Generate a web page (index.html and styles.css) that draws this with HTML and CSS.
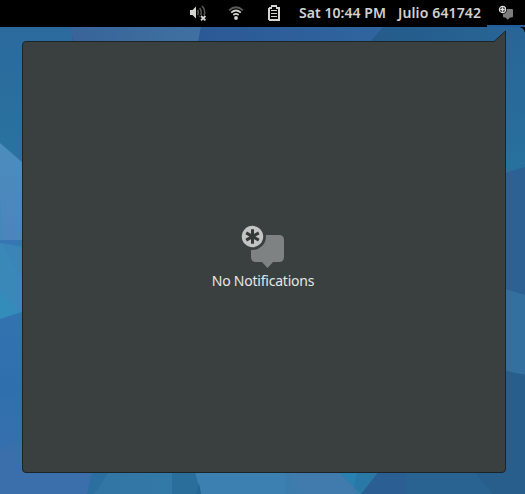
FILE: index.html
```html
<!DOCTYPE html>
<html lang="en">
<head>
<meta charset="utf-8">
<title>Notifications</title>
<link rel="stylesheet" href="styles.css">
</head>
<body>
<svg class="wallpaper" viewBox="0 0 525 494" aria-hidden="true">
  <defs>
    <linearGradient id="teal" x2="0" y2="1"><stop stop-color="#2b6a9d"/><stop offset="1" stop-color="#29749f"/></linearGradient>
    <linearGradient id="light" x2="0" y2="1"><stop stop-color="#4b8dbd"/><stop offset="1" stop-color="#4c83bd"/></linearGradient>
    <linearGradient id="blue" x2="0" y2="1"><stop stop-color="#3576b3"/><stop offset=".6" stop-color="#306fad"/><stop offset="1" stop-color="#3a70ad"/></linearGradient>
    <linearGradient id="right" x2="0" y2="1"><stop stop-color="#286596"/><stop offset="1" stop-color="#28719f"/></linearGradient>
    <linearGradient id="top" x2="1" y2="0"><stop stop-color="#386499"/><stop offset="1" stop-color="#4070a1"/></linearGradient>
    <linearGradient id="mid" x2="1" y2="0"><stop stop-color="#2b5995"/><stop offset="1" stop-color="#3065a0"/></linearGradient>
    <linearGradient id="low" x2="1" y2="0"><stop stop-color="#3175a3"/><stop offset="1" stop-color="#3379a8"/></linearGradient>
    <linearGradient id="corner" x2="1" y2="0"><stop stop-color="#245b8a"/><stop offset="1" stop-color="#286596"/></linearGradient>
  </defs>
  <path fill="#2d6093" d="M0 0h525v494H0z"/>
  <path fill="url(#teal)" d="M0 27h72v160H0z"/>
  <path fill="url(#top)" d="M70 27h131l-4 20H75z"/>
  <path fill="url(#mid)" d="M201 27h182l-18 20H197z"/>
  <path fill="url(#corner)" d="M383 27h142v20H366z"/>
  <path fill="url(#right)" d="M500 27h25v140l-25 8z"/>
  <path fill="url(#light)" d="M0 143l30 26v82L0 244z"/>
  <path fill="#4487b9" d="M0 200q3 20 2 44l-2-1z"/>
  <path fill="url(#blue)" d="M0 240h95v254H0z"/>
  <path fill="#348cbb" d="M0 243l28 6v61L0 319z"/>
  <path fill="#3b84b7" d="M2 243l26 5v36Q12 267 2 243z"/>
  <path fill="#3d86b5" fill-opacity=".65" d="M0 292l20 20 8-2v-26Q10 265 2 244L0 243z"/>
  <path fill="#3c6fa9" fill-opacity=".7" d="M0 450l30-14v36h62l-4 22H0z"/>
  <path fill="#2b6ea0" d="M92 472h18l-16 22h-7z"/>
  <path fill="url(#low)" d="M109 472h63v22H94z"/>
  <path fill="#2a6e9c" d="M172 472h24l4 22h-28z"/>
  <path fill="#3b80b1" d="M195 472h91v22h-85z"/>
  <path fill="#3c7cad" d="M285 472h54l22 22h-76z"/>
  <path fill="#417aac" d="M288 472h51l15 15-1 7h-55z"/>
  <path fill="#236793" d="M199 483l2 11h-5z"/>
  <path fill="#2b5f94" d="M378 472h97l18 22H360z"/>
  <path fill="#286391" d="M406 472h69l18 22h-88z"/>
  <path fill="#2981af" d="M339 472h39l-17 22z"/>
  <path fill="#2a78a6" d="M357 472h21l-17 22-7-8z"/>
  <path fill="#2d6093" d="M506 173l19-6v128l-19-6z"/>
  <path fill="#33709f" d="M506 289l19 6v80l-19-4z"/>
  <path fill="#285e8c" d="M506 371l19 4v119h-32l-18-22h31z"/>
</svg>

<header class="topbar">
  <div class="slot volume">
    <svg width="18" height="18" viewBox="0 0 18 18">
      <path fill="#d4d4d2" d="M1 6h2.500L7 2.500v12L3.500 11H1z"/>
      <g fill="none" stroke="#575757" stroke-width="1.600"><path d="M8.500 6q1.600 2.500 0 5M10.700 4q3.200 4.500 0 9"/><path d="M13 2q4 4.500 2 9"/></g>
      <path d="M11 11h6v6h-6z"/>
      <path stroke="#d4d4d2" stroke-width="1.800" d="M12 12l4.400 4.400m0-4.400L12 16.400"/>
    </svg>
  </div>
  <div class="slot wifi">
    <svg width="16" height="16" viewBox="0 0 16 16">
      <g fill="none" stroke-width="1.700"><path stroke="#5c5c5b" d="M1 5.300Q8 -.8 15 5.300"/><path stroke="#d4d4d2" d="M3.200 7.600Q8 3.400 12.800 7.600M5.300 10Q8 7.800 10.700 10"/></g>
      <circle cx="8" cy="13" r="1.900" fill="#d4d4d2"/>
    </svg>
  </div>
  <div class="slot battery">
    <svg width="12" height="16" viewBox="0 0 12 16" shape-rendering="crispEdges">
      <path fill="#d4d4d2" fill-rule="evenodd" d="M3 0h6v2h2l1 1v12l-1 1H1l-1-1V3l1-1h2zM2 4v10h8V4H8V2H4v2z"/>
      <path fill="#d4d4d2" d="M3 5h6v1H3zM3 8h6v1H3zM3 11h6v1H3z"/>
    </svg>
  </div>
  <div class="clock">Sat 10:44 PM</div>
  <div class="user">Julio 641742</div>
  <div class="indicator">
    <svg width="16" height="16" viewBox="0 0 16 16">
      <path fill="#7d7d7d" d="M5 4h9q1 0 1 1v6q0 1.500-1.500 1.500H12L9.700 14.700 7.500 12.500H6Q5 12.500 5 11z"/>
      <circle cx="4.500" cy="4.500" r="4.500"/><circle cx="4.500" cy="4.500" r="3.100" fill="#111" stroke="#dededc" stroke-width="1.200"/>
      <path stroke="#e4e4e4" stroke-width="1.400" d="M4.500 2.300v4.400M2.300 4.500h4.400"/>
    </svg>
  </div>
</header>

<main class="desktop">
  <section class="panel">
    <svg class="pointer" width="14" height="13" viewBox="0 0 14 13">
      <path fill="#3a403f" d="M1 12l1.500-.5L13.500 1v12H1z"/>
      <path fill="none" stroke="#1b2427" d="M0 11.500h2L13.500 1V13"/>
    </svg>
    <svg width="44" height="44" viewBox="0 0 44 44">
      <path fill="#7f8282" d="M16 10h22q5 0 5 5v17q0 5-5 5h-6l-5.500 6L21 37h-6q-5 0-5-5V15q0-5 6-5z"/>
      <circle cx="11.500" cy="11.500" r="13.500" fill="#3a403f"/>
      <circle cx="11.500" cy="11.500" r="10.700" fill="#c3c4c4"/>
      <path stroke="#343938" stroke-width="3" d="M11.500 4.200v14.600M5.200 7.850l12.600 7.300m0-7.300l-12.600 7.300"/>
    </svg>
    <p class="message">No Notifications</p>
  </section>
</main>
</body>
</html>
```
FILE: styles.css
```css
* { box-sizing: border-box; }

body {
  margin: 0;
  width: 525px;
  height: 494px;
  overflow: hidden;
  display: flex;
  flex-direction: column;
  background: #2d6093;
  font-family: "Noto Sans", "Open Sans", sans-serif;
}

svg { display: block; }

.wallpaper {
  position: absolute;
  inset: 0;
  width: 525px;
  height: 494px;
  z-index: -1;
}

.topbar {
  flex: none;
  height: 27px;
  padding-left: 189px;
  display: grid;
  grid-template-columns: 39px 39px 32px 99px 89px 38px;
  background: #000;
  color: #d2d2d0;
  font-size: 14px;
  font-weight: 600;
  line-height: 26px;
  white-space: nowrap;
}

.volume { padding-top: 4px; }
.wifi { padding-top: 5px; }
.battery { padding: 5px 0 0 1px; }
.clock { letter-spacing: 0.05px; }
.user { letter-spacing: 0.13px; }

.indicator {
  padding: 5px 0 0 11px;
  border-bottom: 2px solid #215d9c;
}

.desktop {
  flex: 1;
  padding: 14px 19px 21px 22px;
  position: relative;
}

.desktop::before {
  content: "";
  position: absolute;
  top: 0;
  right: 0;
  width: 6px;
  height: 6px;
  background: radial-gradient(circle at 0 100%, transparent 5.5px, #000 6px);
}

.panel {
  position: relative;
  height: 432px;
  border: 1px solid #1b2427;
  border-radius: 4px 0 4px 4px;
  background: #3a403f;
  display: flex;
  flex-direction: column;
  align-items: center;
  padding: 183px 2px 0 0;
}

.pointer {
  position: absolute;
  top: -12px;
  right: -1px;
  width: 14px;
}

.message {
  margin: 2px 0 0;
  color: #e6e7e6;
  font-size: 14px;
  line-height: 20px;
  letter-spacing: -0.22px;
}
```
